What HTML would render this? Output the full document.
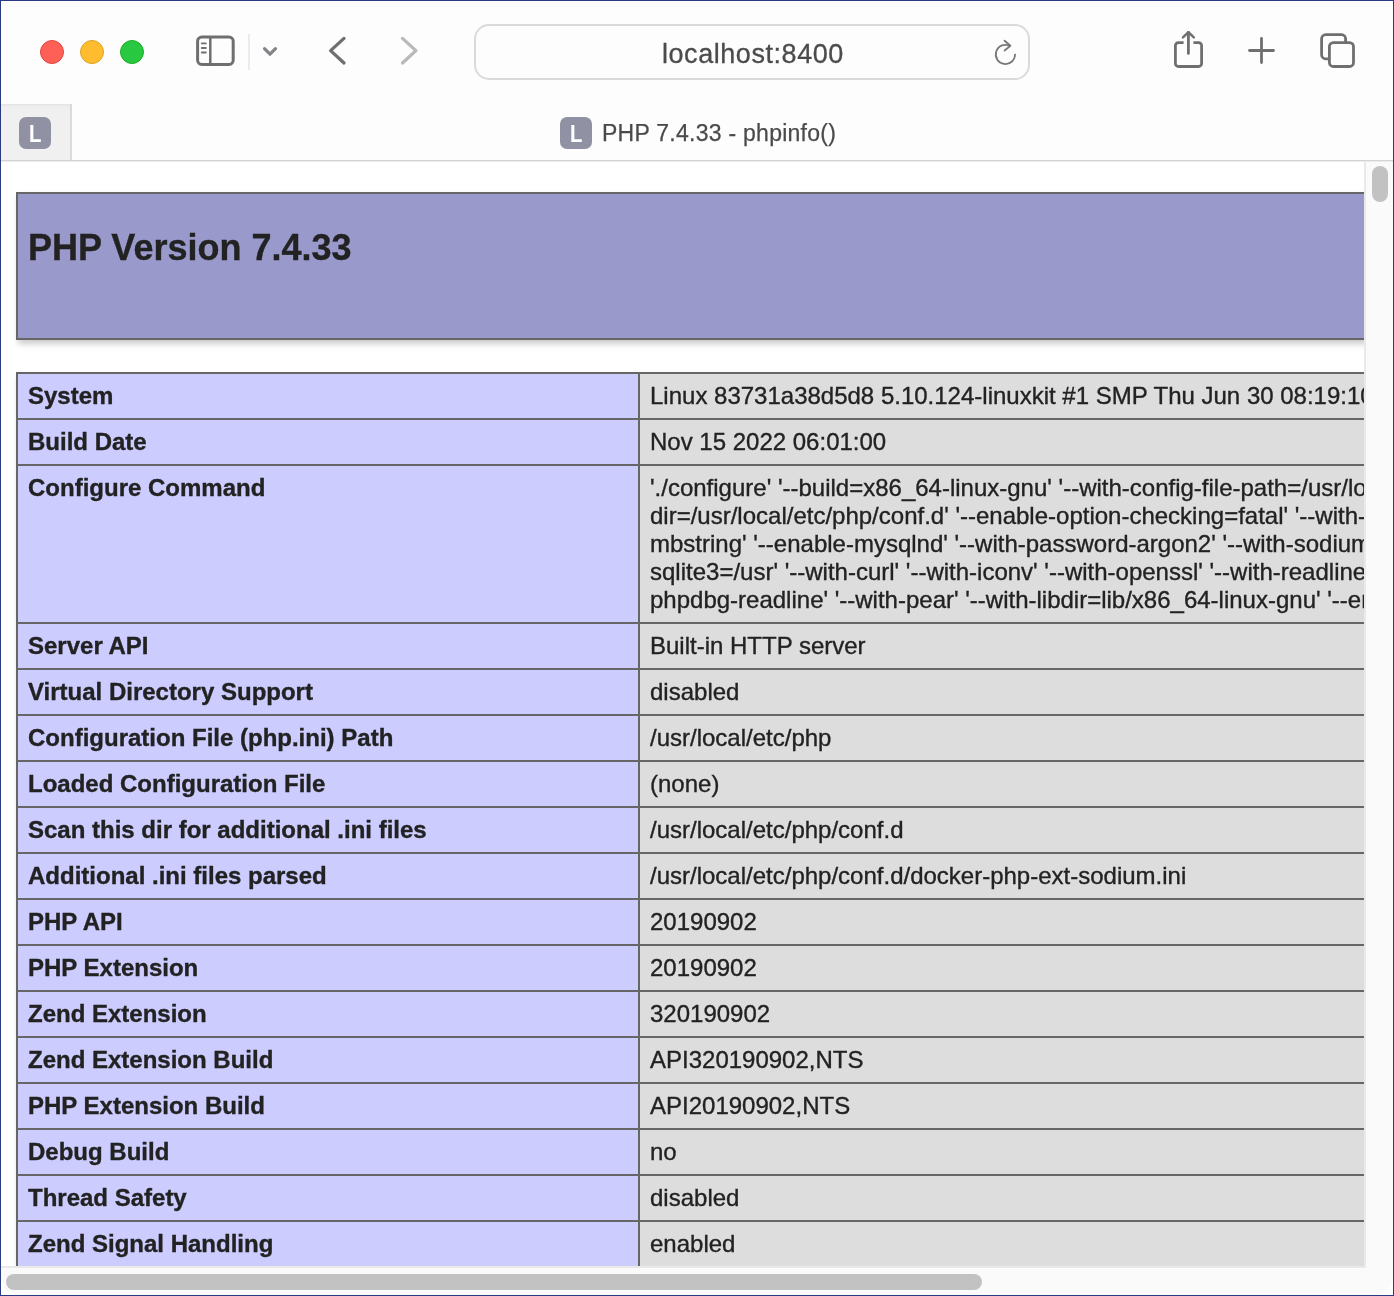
<!DOCTYPE html>
<html lang="en">
<head>
<meta charset="utf-8">
<title>PHP 7.4.33 - phpinfo()</title>
<style>
html,body{margin:0;padding:0;}
body{width:1394px;height:1296px;overflow:hidden;background:#fff;font-family:"Liberation Sans",sans-serif;position:relative;}
#win{position:absolute;left:0;top:0;width:1394px;height:1296px;box-sizing:border-box;border:1px solid #2b3b82;background:#fff;overflow:hidden;}
#chrome{position:absolute;left:0;top:0;width:1392px;height:159px;background:#fdfdfd;}
#tabline{position:absolute;left:0;top:159px;width:1392px;height:1px;background:#d4d4d4;}
#tabline2{position:absolute;left:0;top:160px;width:1392px;height:1px;background:#ececec;}
.tl{position:absolute;top:39px;width:24px;height:24px;border-radius:50%;box-sizing:border-box;}
#tl1{left:39px;background:#fe5f57;border:1px solid #e2463f;}
#tl2{left:79px;background:#febc2e;border:1px solid #dea123;}
#tl3{left:119px;background:#28c840;border:1px solid #1dad2b;}
#icons{position:absolute;left:-1px;top:-1px;width:1394px;height:160px;}
#url{position:absolute;left:473px;top:23px;width:556px;height:56px;box-sizing:border-box;border:2px solid #dadada;border-radius:15px;background:#fdfdfd;}
#urltext{will-change:transform;position:absolute;left:661px;top:37px;font-size:27px;line-height:32px;color:#4b4b4b;white-space:nowrap;letter-spacing:0.550px;-webkit-text-stroke:0.300px #4b4b4b;}
#pin{position:absolute;left:0;top:103px;width:69px;height:56px;background:linear-gradient(#e2e2e2,#ededed 2px,#f0f0f0 7px,#f0f0f0);border-right:2px solid #dadada;}
.fav{will-change:transform;position:absolute;width:32px;height:32px;border-radius:7px;background:#9091a3;color:#fff;font-weight:bold;font-size:23.700px;line-height:35px;text-align:center;}
.fav span{display:inline-block;transform:scaleX(0.86);}
#fav1{left:18px;top:116px;}
#fav2{left:559px;top:116px;}
#title{will-change:transform;position:absolute;left:600.500px;top:116px;font-size:23px;line-height:32px;color:#4a4a4a;white-space:nowrap;letter-spacing:0.260px;-webkit-text-stroke:0.250px #4a4a4a;}
#page{position:absolute;left:0;top:161px;width:1363px;height:1105px;background:#fff;overflow:hidden;}
#inner{position:absolute;left:15px;top:0;width:1868px;color:#222;will-change:transform;-webkit-text-stroke:0.350px #222;}
table{border-collapse:collapse;border:0;width:1868px;box-shadow:2px 4px 6px #ccc;margin:0;}
td,th{border:2px solid #666;font-size:24px;line-height:28px;vertical-align:baseline;padding:8px 10px;text-align:left;}
.e{background:#ccf;width:600px;font-weight:bold;}
.v{background:#ddd;white-space:nowrap;}
.h{background:#99c;font-weight:bold;}
h1{font-size:36px;line-height:42px;margin:0;}
#t1{position:absolute;left:0;top:30px;}
#t2{position:absolute;left:0;top:210px;}
#vtrack{position:absolute;left:1363px;top:161px;width:29px;height:1104px;background:#fafafa;border-left:2px solid #e9e9e9;box-sizing:border-box;}
#corner{position:absolute;left:1363px;top:1265px;width:29px;height:29px;background:#fafafa;border-bottom-right-radius:19px;}
#vthumb{position:absolute;left:1371px;top:165px;width:16px;height:36px;border-radius:8px;background:#c2c2c2;}
#htrack{position:absolute;left:0;top:1265px;width:1365px;height:29px;background:#fafafa;border-top:2px solid #e9e9e9;box-sizing:border-box;border-bottom-left-radius:19px;}
#hthumb{position:absolute;left:5px;top:1273px;width:976px;height:16px;border-radius:8px;background:#c2c2c2;}
</style>
</head>
<body>
<div id="win">
<div id="chrome"></div>
<div id="tabline"></div><div id="tabline2"></div>
<div class="tl" id="tl1"></div><div class="tl" id="tl2"></div><div class="tl" id="tl3"></div>
<div id="url"></div>
<div id="urltext">localhost:8400</div>
<div id="pin"></div>
<div class="fav" id="fav1"><span>L</span></div>
<div class="fav" id="fav2"><span>L</span></div>
<div id="title">PHP 7.4.33 - phpinfo()</div>
<svg id="icons" viewBox="0 0 1394 160" fill="none" stroke="#6f6f6f" stroke-width="2.8" stroke-linecap="round" stroke-linejoin="round">
<!-- sidebar -->
<rect x="197.600" y="37" width="35.600" height="27.400" rx="4.200" stroke-width="3"/>
<path d="M210.300 37V64.400" stroke-width="2.500" stroke-linecap="butt"/>
<path d="M201.800 43.400H205.800M201.800 48H205.800M201.800 52.500H205.800" stroke-width="1.900"/>
<path d="M249 34V70" stroke="#ebebeb" stroke-width="2" stroke-linecap="butt"/>
<path d="M264.500 48.700L270 54.200L275.500 48.700" stroke="#838388" stroke-width="3.200"/>
<!-- back / forward -->
<path d="M344 38.400L330.600 50.600L344 63" stroke-width="3.300"/>
<path d="M402.500 38.400L415.900 50.600L402.500 63" stroke="#b9b9b9" stroke-width="3.300"/>
<!-- reload -->
<path d="M1015 53.900A9.600 9.600 0 1 1 1010.300 46.200" stroke="#777" stroke-width="1.800" stroke-linecap="butt"/>
<path d="M1004.600 40.700L1010.400 45.700L1004.600 50.500" stroke="#777" stroke-width="1.800"/>
<!-- share -->
<path d="M1183.600 42.600H1178.400A3 3 0 0 0 1175.400 45.600V63.500A3 3 0 0 0 1178.400 66.500H1198.600A3 3 0 0 0 1201.600 63.500V45.600A3 3 0 0 0 1198.600 42.600H1193.400" stroke-linecap="butt"/>
<path d="M1188.400 53.400V32.500"/>
<path d="M1183 37.400L1188.400 32.200L1193.800 37.400" stroke-width="2.500"/>
<!-- plus -->
<path d="M1249.500 50.500H1273.500M1261.500 38.500V62.500"/>
<!-- tabs -->
<rect x="1329.400" y="42.600" width="24.100" height="23.900" rx="4"/>
<path d="M1329.400 58.800H1325.600A4 4 0 0 1 1321.600 54.800V38.700A4 4 0 0 1 1325.600 34.700H1341.600A4 4 0 0 1 1345.600 38.700V42.600" stroke-linecap="butt"/>
</svg>
<div id="page"><div id="inner">
<table id="t1"><tr class="h"><td style="height:144px;vertical-align:top;padding-top:0;padding-bottom:0"><h1 style="margin-top:33px">PHP Version 7.4.33</h1></td></tr></table>
<table id="t2">
<tr><td class="e">System </td><td class="v">Linux 83731a38d5d8 5.10.124-linuxkit #1 SMP Thu Jun 30 08:19:10 UTC 2022 x86_64 </td></tr>
<tr><td class="e">Build Date </td><td class="v">Nov 15 2022 06:01:00 </td></tr>
<tr><td class="e">Configure Command </td><td class="v"> './configure'  '--build=x86_64-linux-gnu' '--with-config-file-path=/usr/local/etc/php' '--with-config-file-scan-<br>dir=/usr/local/etc/php/conf.d' '--enable-option-checking=fatal' '--with-mhash' '--with-pic' '--enable-ftp' '--enable-<br>mbstring' '--enable-mysqlnd' '--with-password-argon2' '--with-sodium=shared' '--with-pdo-sqlite=/usr' '--with-<br>sqlite3=/usr' '--with-curl' '--with-iconv' '--with-openssl' '--with-readline' '--with-zlib' '--enable-phpdbg' '--enable-<br>phpdbg-readline' '--with-pear' '--with-libdir=lib/x86_64-linux-gnu' '--enable-embed' 'build_alias=x86_64-linux-gnu' </td></tr>
<tr><td class="e">Server API </td><td class="v">Built-in HTTP server </td></tr>
<tr><td class="e">Virtual Directory Support </td><td class="v">disabled </td></tr>
<tr><td class="e">Configuration File (php.ini) Path </td><td class="v">/usr/local/etc/php </td></tr>
<tr><td class="e">Loaded Configuration File </td><td class="v">(none) </td></tr>
<tr><td class="e">Scan this dir for additional .ini files </td><td class="v">/usr/local/etc/php/conf.d </td></tr>
<tr><td class="e">Additional .ini files parsed </td><td class="v">/usr/local/etc/php/conf.d/docker-php-ext-sodium.ini </td></tr>
<tr><td class="e">PHP API </td><td class="v">20190902 </td></tr>
<tr><td class="e">PHP Extension </td><td class="v">20190902 </td></tr>
<tr><td class="e">Zend Extension </td><td class="v">320190902 </td></tr>
<tr><td class="e">Zend Extension Build </td><td class="v">API320190902,NTS </td></tr>
<tr><td class="e">PHP Extension Build </td><td class="v">API20190902,NTS </td></tr>
<tr><td class="e">Debug Build </td><td class="v">no </td></tr>
<tr><td class="e">Thread Safety </td><td class="v">disabled </td></tr>
<tr><td class="e">Zend Signal Handling </td><td class="v">enabled </td></tr>
<tr><td class="e">Zend Memory Manager </td><td class="v">enabled </td></tr>
<tr><td class="e">Zend Multibyte Support </td><td class="v">provided by mbstring </td></tr>
</table>
</div></div>
<div id="vtrack"></div><div id="corner"></div><div id="vthumb"></div>
<div id="htrack"></div><div id="hthumb"></div>
</div>
</body>
</html>
